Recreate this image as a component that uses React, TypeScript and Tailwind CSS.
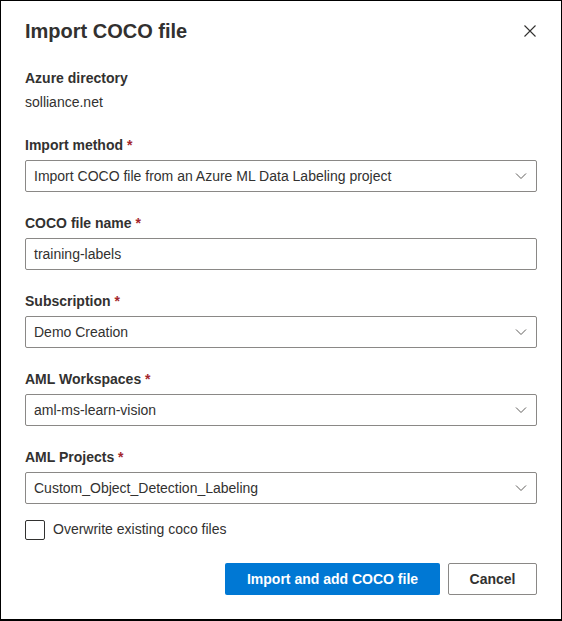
import React from "react";

const font = { fontFamily: '"Liberation Sans", Arial, sans-serif' };

function Chevron() {
  return (
    <svg width="12" height="12" viewBox="0 0 12 12" fill="none" className="shrink-0">
      <path d="M1 3.5 L6 8.5 L11 3.5" stroke="#605e5c" strokeWidth="1" />
    </svg>
  );
}

function Label({ text, required }: { text: string; required?: boolean }) {
  return (
    <div className="h-5 text-[14px] leading-5 font-bold text-[#323130]">
      {text}
      {required && <span className="text-[#a4262c]"> *</span>}
    </div>
  );
}

function Select({ value }: { value: string }) {
  return (
    <div className="mt-[5px] flex h-8 items-center justify-between border border-[#8a8886] rounded-[2px] pl-2 pr-[9px] text-[14px] text-[#323130]">
      <span>{value}</span>
      <Chevron />
    </div>
  );
}

function Field({
  label,
  value,
  input,
  className = "mt-[21px]",
}: {
  label: string;
  value: string;
  input?: boolean;
  className?: string;
}) {
  return (
    <div className={className}>
      <Label text={label} required />
      {input ? (
        <div className="mt-[5px] flex h-8 items-center border border-[#8a8886] rounded-[2px] px-2 text-[14px] text-[#323130]">
          {value}
        </div>
      ) : (
        <Select value={value} />
      )}
    </div>
  );
}

export default function App() {
  return (
    <div style={font} className="w-[562px] h-[621px] bg-white border border-black border-b-2 box-border">
      <div className="px-6 pt-[16px]">
        <div className="flex items-center justify-between">
          <h1 className="text-[20px] leading-7 font-bold text-[#323130]">Import COCO file</h1>
          <svg width="12" height="12" viewBox="0 0 12 12" className="mr-[1px]">
            <path d="M0.5 0.5 L11.5 11.5 M11.5 0.5 L0.5 11.5" stroke="#323130" strokeWidth="1.1" />
          </svg>
        </div>

        <div className="mt-[23px]">
          <Label text="Azure directory" />
          <div className="mt-1 text-[14px] leading-5 text-[#323130]">solliance.net</div>
        </div>

        <Field
          className="mt-[23px]"
          label="Import method"
          value="Import COCO file from an Azure ML Data Labeling project"
        />
        <Field label="COCO file name" value="training-labels" input />
        <Field label="Subscription" value="Demo Creation" />
        <Field label="AML Workspaces" value="aml-ms-learn-vision" />
        <Field label="AML Projects" value="Custom_Object_Detection_Labeling" />

        <label className="mt-[15px] flex items-center gap-2 text-[14px] text-[#323130]">
          <span className="h-5 w-5 border border-[#323130] rounded-[2px]" />
          <span>Overwrite existing coco files</span>
        </label>

        <div className="mt-[23px] flex justify-end gap-2">
          <button className="h-8 w-[215px] bg-[#0078d4] rounded-[2px] text-[14px] font-bold text-white">
            Import and add COCO file
          </button>
          <button className="h-8 w-[89px] border border-[#8a8886] rounded-[2px] bg-white text-[14px] font-bold text-[#323130]">
            Cancel
          </button>
        </div>
      </div>
    </div>
  );
}
